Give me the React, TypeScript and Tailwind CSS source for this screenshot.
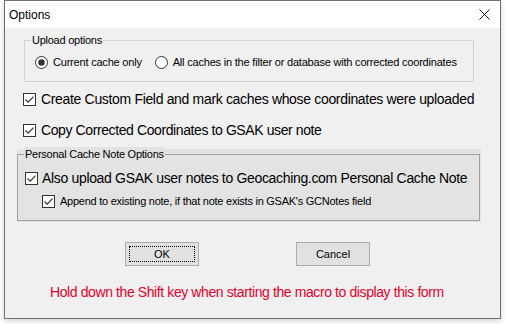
import React from "react";

const font = { fontFamily: '"Liberation Sans", Arial, sans-serif' };

function Check({ size = 13 }: { size?: number }) {
  return (
    <svg width={size} height={size} viewBox="0 0 13 13" className="shrink-0">
      <rect x="0.5" y="0.5" width="12" height="12" fill="#ffffff" stroke="#333333" />
      <path d="M2.5 6.5 L5.2 9.2 L10.5 3.6" fill="none" stroke="#333333" strokeWidth="1.2" />
    </svg>
  );
}

function Radio({ checked }: { checked: boolean }) {
  return (
    <svg width="13" height="13" viewBox="0 0 13 13" className="shrink-0">
      <circle cx="6.5" cy="6.5" r="6" fill="#ffffff" stroke="#333333" />
      {checked && <circle cx="6.5" cy="6.5" r="3.2" fill="#333333" />}
    </svg>
  );
}

export default function App() {
  return (
    <div className="w-[506px] h-[324px] bg-white whitespace-nowrap" style={font}>
      <div className="ml-[4px] w-[497px] h-[319px] border border-[#707070] bg-[#f0f0f0] flex flex-col shadow-[0_2px_6px_rgba(0,0,0,0.18)]">
        {/* title bar */}
        <div className="h-[27px] bg-white flex items-center justify-between pl-[4px] pr-[10px] text-[12px] text-black">
          <span>Options</span>
          <svg width="11" height="11" viewBox="0 0 11 11">
            <path d="M0.5 0.5 L10.5 10.5 M10.5 0.5 L0.5 10.5" stroke="#111" strokeWidth="1" />
          </svg>
        </div>

        {/* upload options group */}
        <div className="relative mt-[12px] ml-[19px] w-[450px] h-[42px] border border-[#d3d3d3]">
          <span className="absolute left-[6px] top-[-8px] bg-[#f0f0f0] px-[1px] text-[11px] leading-[14px] tracking-[-0.25px] text-black">
            Upload options
          </span>
          <div className="flex items-center h-full pt-[3px] pl-[10px] text-[11px] tracking-[-0.2px] text-black">
            <Radio checked />
            <span className="ml-[5px]">Current cache only</span>
            <span className="ml-[13px] flex items-center">
              <Radio checked={false} />
              <span className="ml-[5px]">All caches in the filter or database with corrected coordinates</span>
            </span>
          </div>
        </div>

        {/* checkboxes */}
        <div className="mt-[10px] ml-[18px] flex items-center h-[14px] text-[14px] tracking-[-0.33px] text-black">
          <Check />
          <span className="ml-[5px]">Create Custom Field and mark caches whose coordinates were uploaded</span>
        </div>
        <div className="mt-[17px] ml-[18px] flex items-center h-[14px] text-[14px] tracking-[-0.4px] text-black">
          <Check />
          <span className="ml-[5px]">Copy Corrected Coordinates to GSAK user note</span>
        </div>

        {/* personal cache note panel */}
        <div className="mt-[12px] ml-[12px] w-[464px] h-[73px] bg-[#e3e3e3] pt-[5px]">
          <div className="relative w-[463px] h-[67px] border border-[#a0a0a0]">
            <span className="absolute left-[6px] top-[-8px] bg-[#e3e3e3] px-[1px] text-[11px] leading-[14px] tracking-[-0.25px] text-black">
              Personal Cache Note Options
            </span>
            <div className="mt-[16px] ml-[7px] flex items-center h-[14px] text-[14px] tracking-[-0.33px] text-black">
              <Check />
              <span className="ml-[4px]">Also upload GSAK user notes to Geocaching.com Personal Cache Note</span>
            </div>
            <div className="mt-[10px] ml-[24px] flex items-center h-[13px] text-[11px] tracking-[-0.25px] text-black">
              <Check />
              <span className="ml-[5px]">Append to existing note, if that note exists in GSAK's GCNotes field</span>
            </div>
          </div>
        </div>

        {/* buttons */}
        <div className="mt-[20px] flex text-[11px] text-black">
          <button className="ml-[120px] w-[74px] h-[24px] bg-[#e1e1e1] border border-[#adadad] p-[3px]">
            <div className="w-full h-full border border-dotted border-black flex items-center justify-center">OK</div>
          </button>
          <button className="ml-[97px] w-[74px] h-[24px] bg-[#e1e1e1] border border-[#adadad] flex items-center justify-center">
            Cancel
          </button>
        </div>

        <div className="mt-[18px] ml-[45px] text-[14px] leading-[17px] tracking-[-0.4px] text-[#e4002b]">
          Hold down the Shift key when starting the macro to display this form
        </div>
      </div>
    </div>
  );
}
